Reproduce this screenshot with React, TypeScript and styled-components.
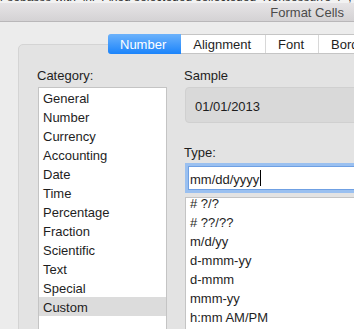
import styled, { createGlobalStyle } from "styled-components"

const GlobalStyle = createGlobalStyle`
  html, body {
    margin: 0;
    padding: 0;
    background: #ececec;
    overflow: hidden;
  }
  body {
    font-family: "Liberation Sans", Arial, sans-serif;
    font-size: 13px;
    color: #1e1e1e;
  }
`

const Window = styled.div`
  width: 354px;
  height: 329px;
  overflow: hidden;
  background: #ececec;
`

const TitleBar = styled.div`
  height: 22px;
  box-sizing: border-box;
  background: linear-gradient(#e9e7e9, #d4d2d4);
  border-bottom: 1px solid #b9b7b9;
  display: flex;
  flex-direction: column;
`

// bottom edge of the window stacked above, cut by the screenshot
const BehindStrip = styled.div`
  height: 3px;
  overflow: hidden;
  background: #f2f2f2;
  white-space: nowrap;
  font-size: 12px;
  line-height: 12px;
  color: #333;
  span {
    display: block;
    margin-top: -9px;
  }
`

const Title = styled.div`
  flex: 1;
  display: flex;
  align-items: center;
  justify-content: flex-end;
  padding-right: 10px;
  color: #4b4b4b;
`

const Content = styled.div`
  padding: 12px 0 0 18px;
`

const TabBar = styled.div`
  position: relative;
  z-index: 1;
  display: flex;
  margin: 0 0 -10px 90px;
  height: 20px;
  width: max-content;
  background: #fff;
  border: 1px solid #c5c5c5;
  border-right: none;
  border-radius: 4px 0 0 4px;
  box-sizing: border-box;
`

const Tab = styled.div<{ $active?: boolean }>`
  display: flex;
  align-items: center;
  padding: 1px 14px 0 12px;
  box-sizing: border-box;
  color: ${({ $active }) => ($active ? "#fff" : "#1e1e1e")};
  background: ${({ $active }) =>
    $active ? "linear-gradient(#6cb2fb, #1b84fb)" : "transparent"};
  border-right: 1px solid ${({ $active }) => ($active ? "transparent" : "#d8d8d8")};
  border-radius: ${({ $active }) => ($active ? "3px 0 0 3px" : "0")};
  margin: ${({ $active }) => ($active ? "-1px 0 -1px -1px" : "0")};
  height: ${({ $active }) => ($active ? "20px" : "100%")};
`

const Panel = styled.div`
  width: 380px;
  height: 320px;
  background: #e3e3e3;
  border: 1px solid #d4d4d4;
  border-radius: 5px;
  box-sizing: border-box;
  display: flex;
  gap: 17px;
  padding: 23px 0 0 18px;
`

const Column = styled.div<{ $grow?: boolean }>`
  display: flex;
  flex-direction: column;
  flex: ${({ $grow }) => ($grow ? "1" : "none")};
`

const Label = styled.div`
  line-height: 16px;
  margin-bottom: 3px;
`

const ListBox = styled.div<{ $width?: number }>`
  width: ${({ $width }) => ($width ? `${$width}px` : "auto")};
  flex: 1;
  background: #fff;
  border: 1px solid #c4c4c4;
  overflow: hidden;
`

const CategoryList = styled(ListBox)`
  margin-left: 1px;
`

const ListRow = styled.div<{ $selected?: boolean }>`
  height: 19px;
  line-height: 21px;
  padding-left: 4px;
  overflow: hidden;
  background: ${({ $selected }) => ($selected ? "#dcdcdc" : "transparent")};
`

const Scrolled = styled.div`
  margin-top: -5px;
`

const SampleBox = styled.div`
  height: 36px;
  box-sizing: border-box;
  background: #d9d9d9;
  border: 1px solid #d0d0d0;
  border-radius: 4px;
  display: flex;
  align-items: center;
  padding: 2px 0 0 9px;
  margin-left: 1px;
`

const TypeLabel = styled(Label)`
  margin-top: 22px;
  margin-bottom: 0;
`

const TypeInput = styled.div`
  height: 24px;
  box-sizing: border-box;
  margin: 5px 0 7px 4px;
  background: #fff;
  border: 1px solid #6fa0e3;
  box-shadow: 0 0 0 3px #9ac0f0;
  display: flex;
  align-items: center;
  padding: 2px 0 0 1px;
`

const Caret = styled.span`
  display: inline-block;
  width: 1px;
  height: 16px;
  background: #000;
  margin: -2px 0 0 1px;
`

const TypeList = styled(ListBox)`
  margin-left: 1px;
`

const categories = [
  "General",
  "Number",
  "Currency",
  "Accounting",
  "Date",
  "Time",
  "Percentage",
  "Fraction",
  "Scientific",
  "Text",
  "Special",
  "Custom",
]

const types = ["# ?/?", "# ??/??", "m/d/yy", "d-mmm-yy", "d-mmm", "mmm-yy", "h:mm AM/PM"]

const tabs = ["Number", "Alignment", "Font", "Border"]

const App = () => {
  return (
    <>
      <GlobalStyle />
      <Window>
        <TitleBar>
          <BehindStrip>
            <span>r sebasss with&nbsp; ini&nbsp; Fixed selecteded sellecteded&nbsp; Nonsessurre&nbsp; r&nbsp; , ' Ir ,ir</span>
          </BehindStrip>
          <Title>Format Cells</Title>
        </TitleBar>
        <Content>
          <TabBar>
            {tabs.map((t, i) => (
              <Tab key={t} $active={i === 0}>{t}</Tab>
            ))}
          </TabBar>
          <Panel>
            <Column>
              <Label>Category:</Label>
              <CategoryList $width={127}>
                {categories.map(c => (
                  <ListRow key={c} $selected={c === "Custom"}>{c}</ListRow>
                ))}
              </CategoryList>
            </Column>
            <Column $grow>
              <Label>Sample</Label>
              <SampleBox>01/01/2013</SampleBox>
              <TypeLabel>Type:</TypeLabel>
              <TypeInput>
                mm/dd/yyyy<Caret />
              </TypeInput>
              <TypeList>
                <Scrolled>
                  {types.map(t => (
                    <ListRow key={t}>{t}</ListRow>
                  ))}
                </Scrolled>
              </TypeList>
            </Column>
          </Panel>
        </Content>
      </Window>
    </>
  )
}

export default App
